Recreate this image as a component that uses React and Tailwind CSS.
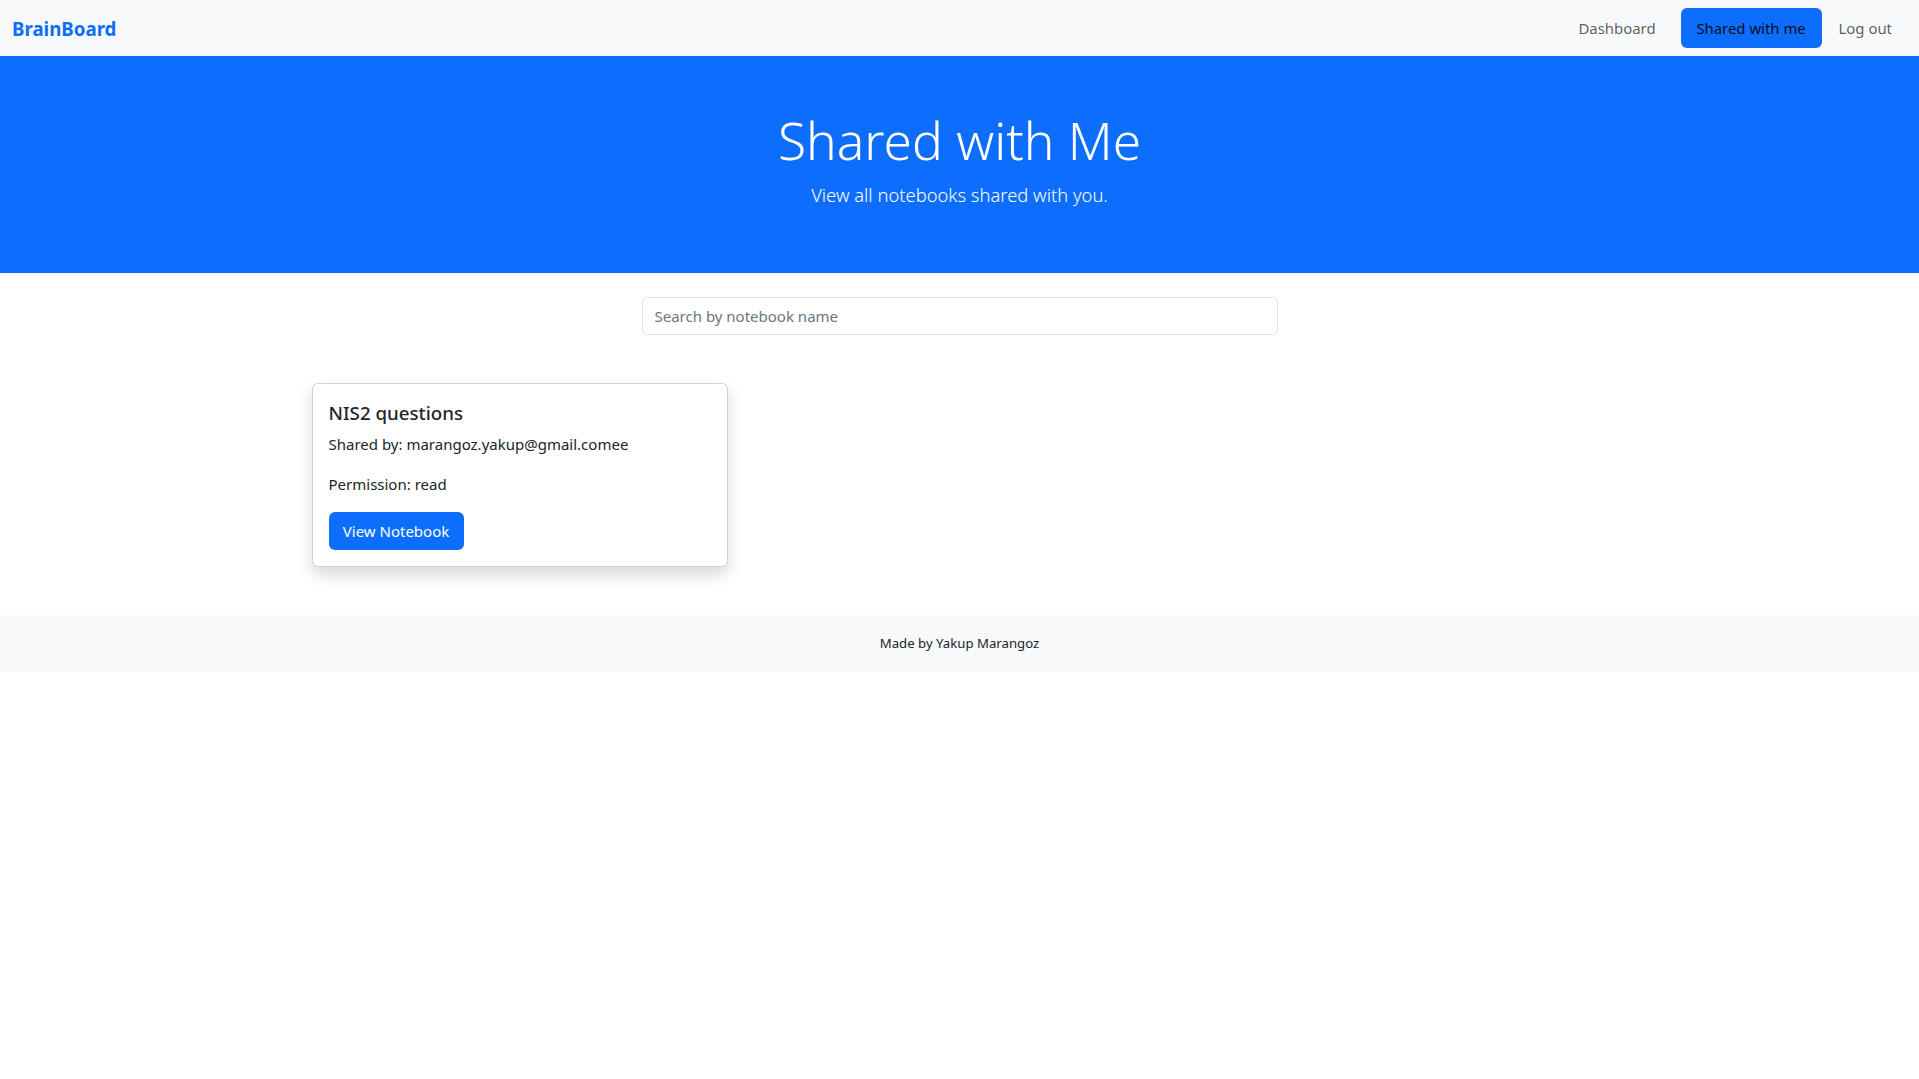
import React from "react";

export default function App() {
  return (
    <div className="min-h-screen bg-white font-['Noto_Sans',sans-serif] text-[#212529] text-[15px] leading-6">
      <nav className="h-14 bg-[#f8f9fa] flex items-center justify-between pl-3 pr-[19px]">
        <a className="pt-[2px] text-[18.7px] font-bold text-[#0d6efd] leading-[30px]">BrainBoard</a>
        <div className="flex items-center">
          <a className="px-2 py-2 text-[14.9px] text-black/65">Dashboard</a>
          <a className="ml-[17px] h-10 w-[141px] flex items-center justify-center rounded-md bg-[#0d6efd] text-[14.9px] text-black/90">
            Shared with me
          </a>
          <a className="ml-[9px] px-2 py-2 text-[14.9px] text-black/65">Log out</a>
        </div>
      </nav>

      <header className="bg-[#0d6efd] text-white text-center py-12">
        <h1 className="pt-[3px] text-[51.5px] font-light leading-[67.2px] mb-[5px]">Shared with Me</h1>
        <p className="pt-[1px] text-[18.4px] font-light leading-[30px] mb-[15px]">View all notebooks shared with you.</p>
      </header>

      <main className="mx-auto w-[1320px] px-3 my-6">
        <div className="flex justify-center mb-12">
          <input
            type="text"
            placeholder="Search by notebook name"
            className="w-[636px] h-[38px] px-3 rounded-md border border-[#dee2e6] bg-white text-[15px] placeholder:text-[#6c757d] outline-none"
          />
        </div>
        <div className="grid grid-cols-3 gap-6">
          <div className="mb-6 rounded-md border border-black/[0.175] bg-white shadow-[0_8px_16px_rgba(0,0,0,0.15)]">
            <div className="p-4">
              <h5 className="pt-[1px] text-[18.7px] font-medium leading-6 mb-[7px]">NIS2 questions</h5>
              <p className="mb-4">Shared by: marangoz.yakup@gmail.comee</p>
              <p className="mb-4">Permission: read</p>
              <button className="h-[38px] w-[135px] rounded-md bg-[#0d6efd] text-white text-[15px]">View Notebook</button>
            </div>
          </div>
        </div>
      </main>

      <footer className="bg-[#f8f9fa] py-4 text-center">
        <p className="text-[13.2px] leading-6">Made by Yakup Marangoz</p>
      </footer>
    </div>
  );
}
